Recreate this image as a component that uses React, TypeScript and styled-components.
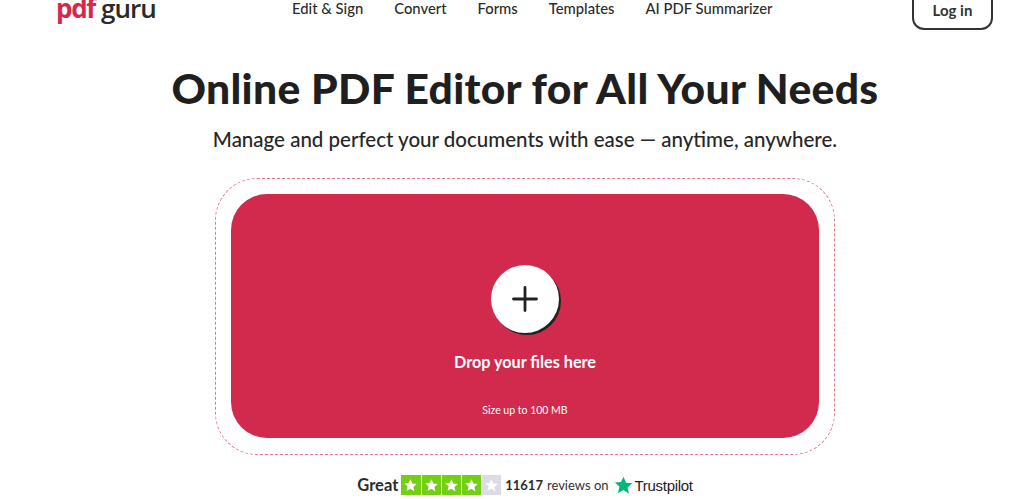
import React from "react";
import styled, { createGlobalStyle } from "styled-components";

const Global = createGlobalStyle`
  html, body { margin: 0; padding: 0; background: #fff; }
  body { font-family: "Lato", "Noto Sans", sans-serif; color: #222; overflow: hidden; height: 499px; }
`;
const Page = styled.div`
  width: 1024px; height: 499px; overflow: hidden;
  display: flex; flex-direction: column;
`;
const Header = styled.header`
  width: 100%; height: 30px; flex: none; overflow: hidden;
  box-sizing: border-box; padding: 0 31px 0 56px;
  display: flex; align-items: flex-end;
`;
const Logo = styled.div`
  align-self: flex-start; margin-top: -9px; width: 98px; flex: none;
  font-family: "Open Sans", sans-serif; font-size: 26px; line-height: 34px; font-weight: 600;
  letter-spacing: -1px; white-space: nowrap; display: flex; gap: 6px;
`;
const LogoRed = styled.span` color: #d22a4c; font-weight: 700; letter-spacing: -1.3px; `;
const LogoDark = styled.span` color: #2a2a2a; `;
const Nav = styled.nav`
  align-self: flex-start; display: flex; gap: 31px; margin: -1px 0 0 138px; flex: 1;
`;
const NavLink = styled.a`
  font-size: 14.8px; line-height: 18px; font-weight: 500; color: #2b2b2b; white-space: nowrap;
`;
const LoginButton = styled.button`
  width: 81px; height: 44px; flex: none; box-sizing: border-box;
  border: 2px solid #333; border-radius: 12px; background: #fff;
  font: 700 15px "Lato", sans-serif; color: #333; padding: 4px 0 0;
`;
const Main = styled.main`
  padding-left: 26px; display: flex; flex-direction: column; align-items: center;
`;
const Title = styled.h1`
  margin: 35px 0 0; font-size: 42.6px; line-height: 46px; font-weight: 900; color: #1f1f1f;
  letter-spacing: 0.3px; white-space: nowrap;
`;
const Subtitle = styled.p`
  margin: 15px 0 0; font-size: 20.5px; line-height: 26px; font-weight: 500; color: #262626; white-space: nowrap;
`;
const DropFrame = styled.div`
  margin: 26px 0 0; width: 620px; height: 277px; box-sizing: border-box; padding: 15px 15px 16px;
  border: 1px dashed #e2758c; border-radius: 42px; flex: none; display: flex;
`;
const DropZone = styled.div`
  flex: 1; background: #d22a4c; border-radius: 36px; color: #fff;
  display: flex; flex-direction: column; align-items: center;
`;
const PlusCircle = styled.div`
  margin-top: 71px; width: 68px; height: 68px; border-radius: 50%; background: #fff;
  box-shadow: 2px 2px 0 #222; display: flex; align-items: center; justify-content: center;
`;
const DropText = styled.div`
  margin-top: 19px; font-size: 16.2px; line-height: 20px; font-weight: 700;
`;
const SizeText = styled.div`
  margin-top: 32px; font-size: 10.5px; line-height: 13px;
`;
const Rating = styled.div`
  margin-top: 19px; display: flex; align-items: center; height: 22px; white-space: nowrap;
`;
const Great = styled.span` font-size: 16.5px; font-weight: 700; color: #2b2b2b; margin-right: 3px; `;
const Stars = styled.div` display: flex; gap: 1px; margin-right: 4px; `;
const StarBox = styled.div<{ $on: boolean }>`
  width: 19.2px; height: 20px; background: ${p => (p.$on ? "#73cf11" : "#dcdce6")};
  display: flex; align-items: center; justify-content: center;
`;
const Count = styled.span` font-size: 13px; font-weight: 700; color: #2b2b2b; margin-right: 4px; `;
const Reviews = styled.span` font-size: 13px; color: #333; margin-right: 4px; `;
const TrustName = styled.span`
  font-family: "Liberation Sans", sans-serif; font-size: 15px; color: #222; letter-spacing: -0.3px; margin-left: 1px;
`;
const STAR = "M12 2l2.9 6.9 7.1.6-5.4 4.7 1.7 7.3L12 17l-6.3 3.5 1.7-7.3L2 8.5l7.1-.6z";

export default function App() {
  return (
    <Page>
      <Global />
      <Header>
        <Logo><LogoRed>pdf</LogoRed><LogoDark>guru</LogoDark></Logo>
        <Nav>
          {["Edit & Sign", "Convert", "Forms", "Templates", "AI PDF Summarizer"].map(n => (
            <NavLink key={n}>{n}</NavLink>
          ))}
        </Nav>
        <LoginButton>Log in</LoginButton>
      </Header>
      <Main>
        <Title>Online PDF Editor for All Your Needs</Title>
        <Subtitle>Manage and perfect your documents with ease — anytime, anywhere.</Subtitle>
        <DropFrame>
          <DropZone>
            <PlusCircle>
              <svg width="26" height="26" viewBox="0 0 26 26" fill="none" stroke="#222" strokeWidth="2.8" strokeLinecap="round">
                <path d="M13 1.5v23M1.5 13h23" />
              </svg>
            </PlusCircle>
            <DropText>Drop your files here</DropText>
            <SizeText>Size up to 100 MB</SizeText>
          </DropZone>
        </DropFrame>
        <Rating>
          <Great>Great</Great>
          <Stars>
            {[true, true, true, true, false].map((on, i) => (
              <StarBox key={i} $on={on}>
                <svg width="15" height="15" viewBox="0 0 24 24" fill="#fff"><path d={STAR} /></svg>
              </StarBox>
            ))}
          </Stars>
          <Count>11617</Count>
          <Reviews>reviews on</Reviews>
          <svg width="21" height="21" viewBox="0 0 24 24" fill="#00b67a"><path d={STAR} /></svg>
          <TrustName>Trustpilot</TrustName>
        </Rating>
      </Main>
    </Page>
  );
}
